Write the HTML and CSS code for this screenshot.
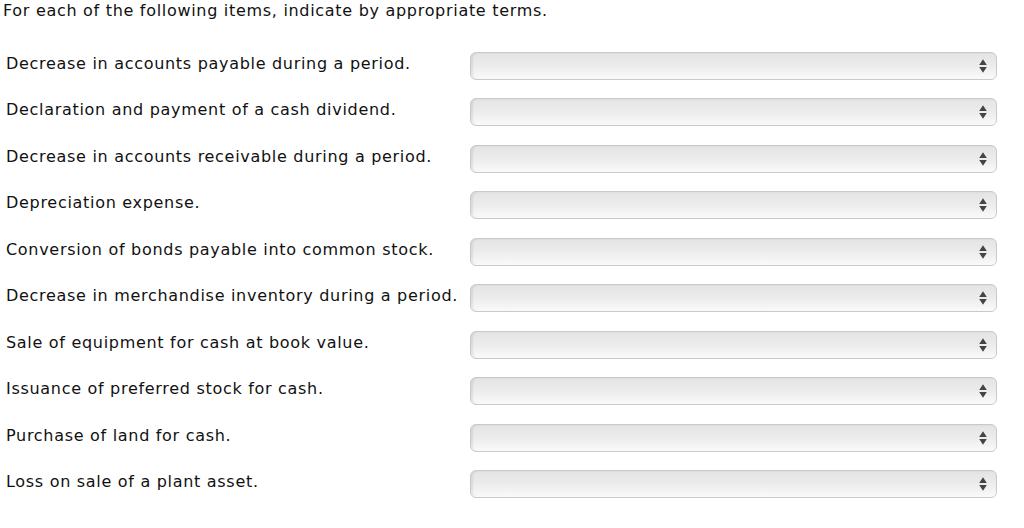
FILE: index.html
```html
<!DOCTYPE html>
<html>
<head>
<meta charset="utf-8">
<link rel="stylesheet" href="styles.css">
</head>
<body>
<div class="page">
  <p class="intro">For each of the following items, indicate by appropriate terms.</p>
  <div class="rows">
    <div class="row"><span class="label">Decrease in accounts payable during a period.</span><div class="select"><svg class="arrows" width="8" height="14" viewBox="0 0 8 14"><path d="M4 0.3 L7.8 6 L0.2 6 Z M0.2 8 L7.8 8 L4 13.7 Z" fill="#444444"/></svg></div></div>
    <div class="row"><span class="label">Declaration and payment of a cash dividend.</span><div class="select"><svg class="arrows" width="8" height="14" viewBox="0 0 8 14"><path d="M4 0.3 L7.8 6 L0.2 6 Z M0.2 8 L7.8 8 L4 13.7 Z" fill="#444444"/></svg></div></div>
    <div class="row"><span class="label">Decrease in accounts receivable during a period.</span><div class="select"><svg class="arrows" width="8" height="14" viewBox="0 0 8 14"><path d="M4 0.3 L7.8 6 L0.2 6 Z M0.2 8 L7.8 8 L4 13.7 Z" fill="#444444"/></svg></div></div>
    <div class="row"><span class="label">Depreciation expense.</span><div class="select"><svg class="arrows" width="8" height="14" viewBox="0 0 8 14"><path d="M4 0.3 L7.8 6 L0.2 6 Z M0.2 8 L7.8 8 L4 13.7 Z" fill="#444444"/></svg></div></div>
    <div class="row"><span class="label">Conversion of bonds payable into common stock.</span><div class="select"><svg class="arrows" width="8" height="14" viewBox="0 0 8 14"><path d="M4 0.3 L7.8 6 L0.2 6 Z M0.2 8 L7.8 8 L4 13.7 Z" fill="#444444"/></svg></div></div>
    <div class="row"><span class="label">Decrease in merchandise inventory during a period.</span><div class="select"><svg class="arrows" width="8" height="14" viewBox="0 0 8 14"><path d="M4 0.3 L7.8 6 L0.2 6 Z M0.2 8 L7.8 8 L4 13.7 Z" fill="#444444"/></svg></div></div>
    <div class="row"><span class="label">Sale of equipment for cash at book value.</span><div class="select"><svg class="arrows" width="8" height="14" viewBox="0 0 8 14"><path d="M4 0.3 L7.8 6 L0.2 6 Z M0.2 8 L7.8 8 L4 13.7 Z" fill="#444444"/></svg></div></div>
    <div class="row"><span class="label">Issuance of preferred stock for cash.</span><div class="select"><svg class="arrows" width="8" height="14" viewBox="0 0 8 14"><path d="M4 0.3 L7.8 6 L0.2 6 Z M0.2 8 L7.8 8 L4 13.7 Z" fill="#444444"/></svg></div></div>
    <div class="row"><span class="label">Purchase of land for cash.</span><div class="select"><svg class="arrows" width="8" height="14" viewBox="0 0 8 14"><path d="M4 0.3 L7.8 6 L0.2 6 Z M0.2 8 L7.8 8 L4 13.7 Z" fill="#444444"/></svg></div></div>
    <div class="row"><span class="label">Loss on sale of a plant asset.</span><div class="select"><svg class="arrows" width="8" height="14" viewBox="0 0 8 14"><path d="M4 0.3 L7.8 6 L0.2 6 Z M0.2 8 L7.8 8 L4 13.7 Z" fill="#444444"/></svg></div></div>
  </div>
</div>
</body>
</html>
```
FILE: styles.css
```css
html, body {
  margin: 0;
  padding: 0;
  background: #ffffff;
}
.page {
  font-family: "DejaVu Sans", Verdana, sans-serif;
  font-size: 16px;
  letter-spacing: 0.7px;
  color: #111111;
  width: 1024px;
  height: 528px;
  overflow: hidden;
}
.intro {
  margin: 0;
  padding-left: 3px;
  padding-top: 1px;
  line-height: 20px;
  height: 51px;
}
.rows {
  display: flex;
  flex-direction: column;
  gap: 18.44px;
}
.row {
  display: flex;
  align-items: flex-start;
  height: 28px;
}
.label {
  width: 464px;
  padding-left: 6px;
  padding-top: 2px;
  line-height: 20px;
  white-space: nowrap;
}
.select {
  box-sizing: border-box;
  width: 527px;
  height: 28px;
  border: 1px solid #c9c9c9;
  border-radius: 6px;
  background: linear-gradient(to bottom, #e4e4e4 0%, #ececec 50%, #fafafa 100%);
  box-shadow: inset 2px 0 2px rgba(0,0,0,0.08), inset 0 -1px 0 #ffffff;
  display: flex;
  align-items: center;
  justify-content: flex-end;
  padding-right: 9px;
}
.arrows {
  display: block;
}
```
